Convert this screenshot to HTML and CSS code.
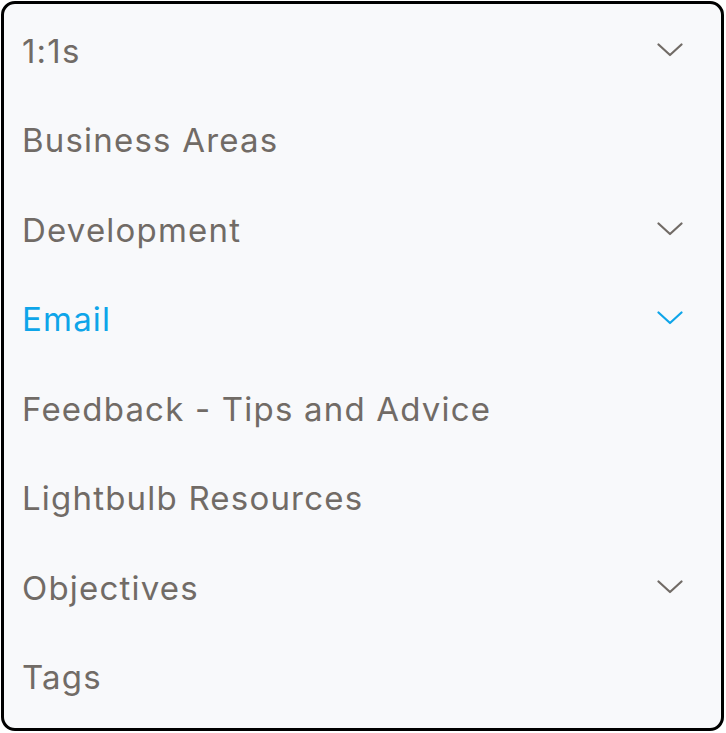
FILE: index.html
```html
<!DOCTYPE html>
<html lang="en">
<head>
  <meta charset="UTF-8" />
  <title>Categories</title>
  <link rel="stylesheet" href="styles.css">
</head>
<body>
  <div class="menu">
    <div class="menu-item">
      <span>1:1s</span>
      <svg class="chevron" viewBox="0 0 26 14"><path d="M1.5 1.5 L13 12 L24.5 1.5" /></svg>
    </div>
    <div class="menu-item">
      <span>Business Areas</span>
    </div>
    <div class="menu-item">
      <span>Development</span>
      <svg class="chevron" viewBox="0 0 26 14"><path d="M1.5 1.5 L13 12 L24.5 1.5" /></svg>
    </div>
    <div class="menu-item active">
      <span>Email</span>
      <svg class="chevron" viewBox="0 0 26 14"><path d="M1.5 1.5 L13 12 L24.5 1.5" /></svg>
    </div>
    <div class="menu-item">
      <span>Feedback - Tips and Advice</span>
    </div>
    <div class="menu-item">
      <span>Lightbulb Resources</span>
    </div>
    <div class="menu-item">
      <span>Objectives</span>
      <svg class="chevron" viewBox="0 0 26 14"><path d="M1.5 1.5 L13 12 L24.5 1.5" /></svg>
    </div>
    <div class="menu-item">
      <span>Tags</span>
    </div>
  </div>
</body>
</html>
```

FILE: styles.css
```css
* {
  box-sizing: border-box;
}
html, body {
  margin: 0;
  padding: 0;
  background: #ffffff;
}
body {
  font-family: Inter, "Noto Sans", sans-serif;
  padding: 1px 2px 2px 1px;
}
.menu {
  width: 723px;
  height: 730px;
  border: 3px solid #000;
  border-radius: 14px;
  background: #f8f9fb;
  display: flex;
  flex-direction: column;
  padding-top: 2px;
  overflow: hidden;
}
.menu-item {
  height: 89.5px;
  flex-shrink: 0;
  display: flex;
  align-items: center;
  justify-content: space-between;
  padding: 0 38px 0 18px;
  font-size: 33px;
  letter-spacing: 1.2px;
  color: #716b66;
}
.menu-item.active {
  color: #0ea5e9;
}
.chevron {
  width: 26px;
  height: 14px;
  margin-top: -2px;
  fill: none;
  stroke: currentColor;
  stroke-width: 2.2;
  stroke-linecap: round;
  stroke-linejoin: round;
}
```
